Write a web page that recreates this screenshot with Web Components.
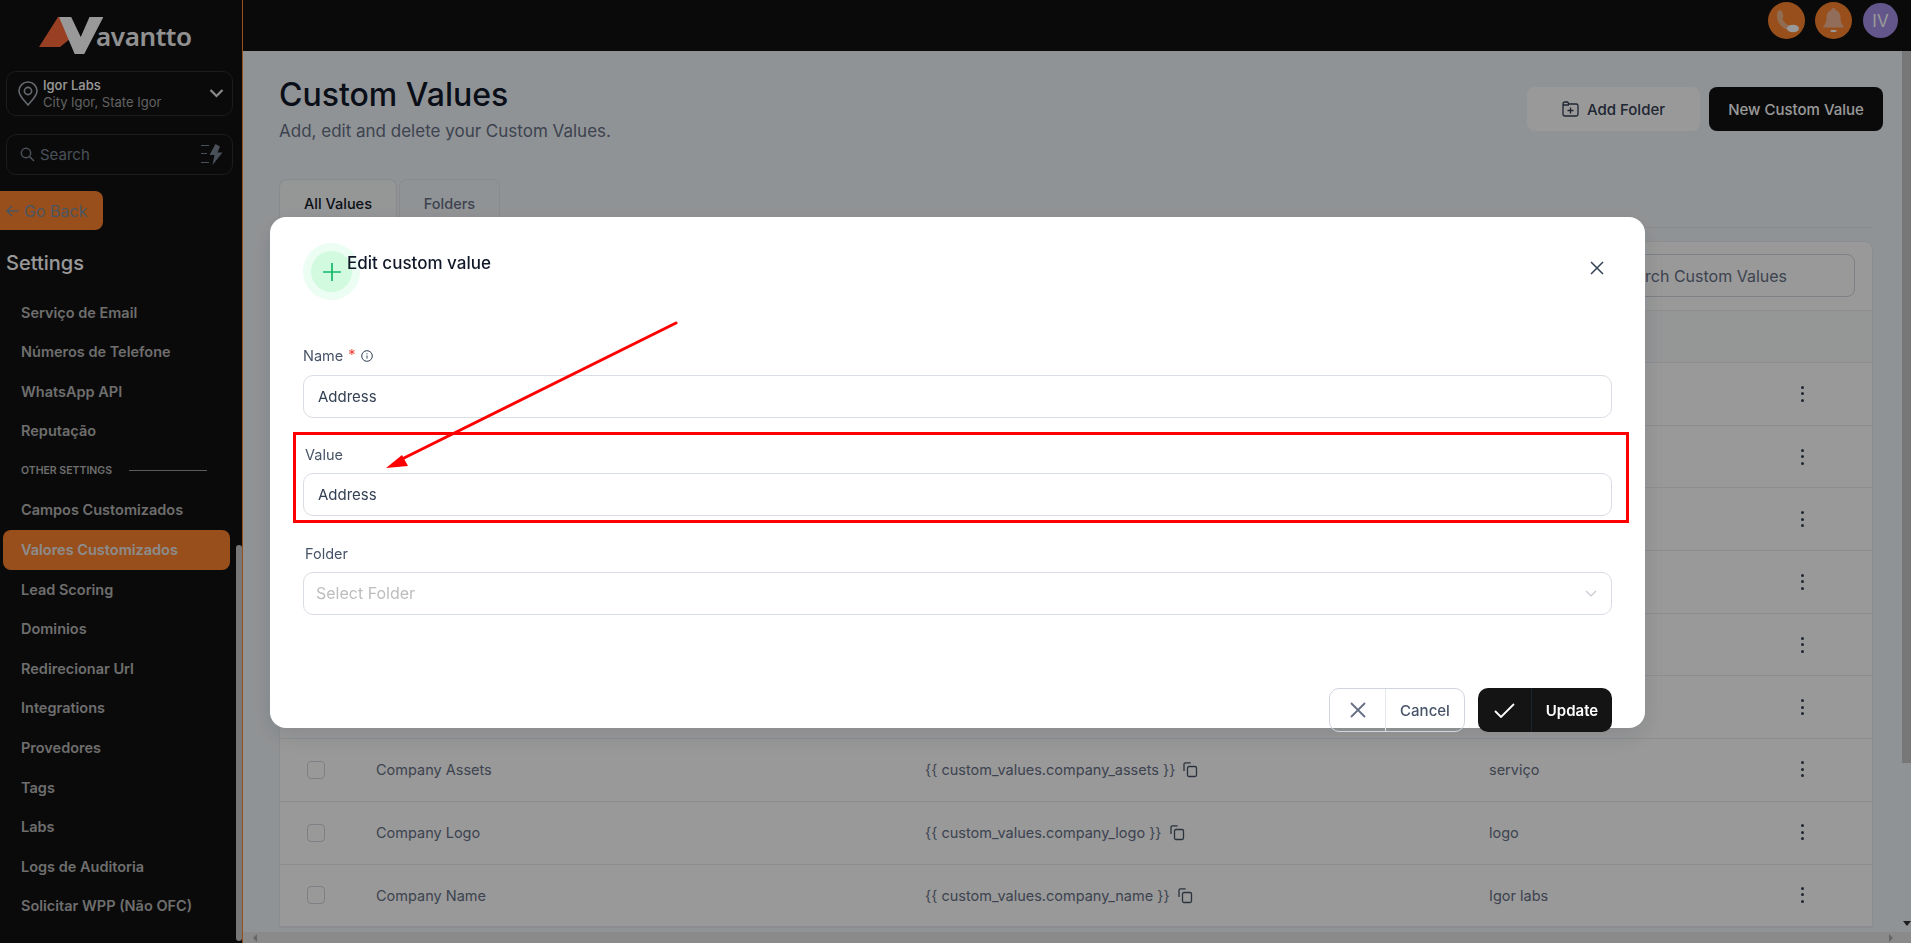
<!DOCTYPE html>
<html lang="en">
<head>
<meta charset="utf-8">
<title>Custom Values</title>
<style>
  html, body { margin: 0; height: 100%; overflow: hidden; background: #111; }
  body { font-family: Inter, "Liberation Sans", sans-serif; }
</style>
</head>
<body>
<app-shell>
  <side-bar slot="side">
    <nav-item>Serviço de Email</nav-item>
    <nav-item>Números de Telefone</nav-item>
    <nav-item>WhatsApp API</nav-item>
    <nav-item>Reputação</nav-item>
    <nav-group>OTHER SETTINGS</nav-group>
    <nav-item>Campos Customizados</nav-item>
    <nav-item active>Valores Customizados</nav-item>
    <nav-item>Lead Scoring</nav-item>
    <nav-item>Dominios</nav-item>
    <nav-item>Redirecionar Url</nav-item>
    <nav-item>Integrations</nav-item>
    <nav-item>Provedores</nav-item>
    <nav-item>Tags</nav-item>
    <nav-item>Labs</nav-item>
    <nav-item>Logs de Auditoria</nav-item>
    <nav-item>Solicitar WPP (Não OFC)</nav-item>
  </side-bar>
  <top-bar slot="top"></top-bar>
  <values-page slot="main">
    <value-row></value-row>
    <value-row></value-row>
    <value-row></value-row>
    <value-row></value-row>
    <value-row></value-row>
    <value-row></value-row>
    <value-row name="Company Assets" token="{{ custom_values.company_assets }}" folder="serviço"></value-row>
    <value-row name="Company Logo" token="{{ custom_values.company_logo }}" folder="logo"></value-row>
    <value-row name="Company Name" token="{{ custom_values.company_name }}" folder="Igor labs"></value-row>
  </values-page>
</app-shell>
<edit-modal>
  <form-field label="Name" required info value="Address"></form-field>
  <form-field label="Value" value="Address" tuck></form-field>
  <form-field label="Folder" placeholder="Select Folder" tuck select></form-field>
</edit-modal>
<red-notes></red-notes>

<script>
class AppShell extends HTMLElement {
  connectedCallback() {
    this.attachShadow({ mode: 'open' });
    this.shadowRoot.innerHTML = `
      <style>
        :host { display: grid; grid-template-columns: 243px 1fr; grid-template-rows: 51px 1fr; height: 943px; background: #f1f5f9; overflow: hidden; }
        .side { grid-row: 1 / 3; min-height: 0; }
        .main { min-height: 0; min-width: 0; display: flex; flex-direction: column; }
      </style>
      <div class="side"><slot name="side"></slot></div>
      <slot name="top"></slot>
      <div class="main"><slot name="main"></slot></div>
    `;
  }
}
customElements.define('app-shell', AppShell);

class SideBar extends HTMLElement {
  connectedCallback() {
    this.attachShadow({ mode: 'open' });
    this.shadowRoot.innerHTML = `
      <style>
        :host { display: block; position: relative; height: 943px; box-sizing: border-box; width: 243px; background: #111; border-right: 1px solid #ff842d; color: #b7b7b7; overflow: hidden; }
        .logo { display: flex; align-items: flex-start; height: 71px; padding: 17px 0 0 39px; box-sizing: border-box; }
        .logo svg { display: block; flex: none; }
        .logo span { font: 600 26px/1 "Noto Sans", sans-serif; color: #fff; margin: 1px 0 0 -7px; padding-top: 5px; letter-spacing: -0.4px; opacity: .95; }
        .box { margin: 0 9px 0 6px; width: 227px; box-sizing: border-box; border: 1px solid #2f2f2f; border-radius: 10px; display: flex; align-items: center; position: relative; }
        .loc { height: 45px; padding-left: 11px; }
        .loc .txt { margin-left: 5px; font-size: 13px; line-height: 17px; }
        .loc b { display: block; font-weight: 500; color: #fff; }
        .loc i { display: block; font-style: normal; color: #a3a3a3; }
        .loc .chev { position: absolute; right: 8px; top: 16px; }
        .find { height: 41px; margin-top: 18px; padding-left: 13px; color: #7c8694; font-size: 15px; }
        .find span { margin-left: 5px; }
        .find .bolt { position: absolute; right: 6px; top: 9px; }
        .back { display: flex; align-items: center; gap: 5px; margin-top: 16px; width: 103px; height: 39px; padding-left: 6px; box-sizing: border-box; background: #ff842d; border-radius: 0 8px 8px 0; color: #7c8ea3; font-size: 16px; }
        h2 { margin: 19px 0 15px 6px; font: 500 20px/28px Inter, sans-serif; color: #fff; }
        .thumb { position: absolute; left: 236px; top: 545px; width: 6px; height: 396px; border-radius: 3px; background: #c6c6c6; }
      </style>
      <div class="logo">
        <svg width="64" height="37" viewBox="0 0 64 37">
          <polygon points="0,30 19,0 27,0 37,17 21,30" fill="#ff6a3c"/>
          <polygon points="23,0 37,0 48,20 58,0 74,0 52,37 41,37" fill="#fff" transform="scale(.87 1)"/>
        </svg>
        <span>avantto</span>
      </div>
      <div class="box loc">
        <svg width="20" height="25" viewBox="0 0 20 25" fill="none" stroke="#a9b0ba" stroke-width="1.6"><path d="M10 24C6 19 1 15 1 10a9 9 0 0 1 18 0c0 5-5 9-9 14z"/><circle cx="10" cy="10" r="3.6"/></svg>
        <div class="txt"><b>Igor Labs</b><i>City Igor, State Igor</i></div>
        <svg class="chev" width="15" height="10" viewBox="0 0 15 10" fill="none" stroke="#e6e6e6" stroke-width="2.2"><path d="M1.5 2l6 6 6-6"/></svg>
      </div>
      <div class="box find">
        <svg width="15" height="15" viewBox="0 0 15 15" fill="none" stroke="#7c8694" stroke-width="1.5"><circle cx="6" cy="6" r="4.7"/><path d="M9.6 9.6L14 14"/></svg>
        <span>Search</span>
        <svg class="bolt" width="26" height="22" viewBox="0 0 26 22" fill="#7c8694"><path d="M15.5 0l-6 11h5l-2 10 10-12.500h-5l2.500-6z"/><rect x="1" y="1" width="8" height="1"/><rect x="1" y="9" width="6" height="1"/><rect x="1" y="18" width="8" height="1"/></svg>
      </div>
      <div class="back">
        <svg width="13" height="12" viewBox="0 0 13 12" fill="none" stroke="#7c8ea3" stroke-width="1.5"><path d="M12.500 6H1M6 1L1 6l5 5"/></svg>
        Go Back
      </div>
      <h2>Settings</h2>
      <slot></slot>
      <div class="thumb"></div>
    `;
  }
}
customElements.define('side-bar', SideBar);

class NavItem extends HTMLElement {
  connectedCallback() {
    this.attachShadow({ mode: 'open' });
    const on = this.hasAttribute('active');
    this.shadowRoot.innerHTML = `
      <style>
        :host { display: block; height: 39.6px; }
        div { margin-left: 3px; width: 227px; height: 40px; box-sizing: border-box; padding-left: 18px; display: flex; align-items: center; border-radius: 8px; font: 600 14.5px Inter, sans-serif; color: #b7b7b7; }
        .on { background: #ff842d; color: #e9e9e9; }
      </style>
      <div class="${on ? 'on' : ''}"><slot></slot></div>
    `;
  }
}
customElements.define('nav-item', NavItem);

class NavGroup extends HTMLElement {
  connectedCallback() {
    this.attachShadow({ mode: 'open' });
    this.shadowRoot.innerHTML = `
      <style>
        :host { display: flex; align-items: center; height: 39.6px; padding-left: 21px; font: 600 10.500px Inter, sans-serif; color: #b7b7b7; }
        i { display: block; margin-left: 17px; width: 78px; height: 1px; background: #9a9a9a; }
      </style>
      <slot></slot><i></i>
    `;
  }
}
customElements.define('nav-group', NavGroup);

class TopBar extends HTMLElement {
  connectedCallback() {
    this.attachShadow({ mode: 'open' });
    this.shadowRoot.innerHTML = `
      <style>
        :host { display: flex; align-items: center; justify-content: flex-end; gap: 10px; height: 51px; padding: 0 13px 10px 0; box-sizing: border-box; background: #111; }
        .dot { width: 37px; height: 37px; border-radius: 50%; background: #ff842d; display: flex; align-items: center; justify-content: center; }
        .me { width: 35px; height: 35px; margin-left: 1px; background: #a58fe6; color: #fff; font: 400 17px Inter, sans-serif; }
      </style>
      <div class="dot">
        <svg width="37" height="37" viewBox="0 0 37 37"><path d="M10 9c3-2 4 0 5 3s-1 4 0 6 3 4 5 5 3 1 2 3-3 2-5 1c-5-3-8-8-8-13 0-2 0-4 1-5z" fill="#f0b48a"/><ellipse cx="25" cy="26.500" rx="6" ry="3.800" fill="#fff"/></svg>
      </div>
      <div class="dot">
        <svg width="37" height="37" viewBox="0 0 37 37"><path d="M18.500 6c1.400 0 2.200 1 2.300 2.200 3.300 1 4.700 4 4.700 7.800 0 4 1 6 3 8v1.500H8.500V24c2-2 3-4 3-8 0-3.800 1.400-6.800 4.700-7.800.1-1.200.9-2.200 2.300-2.200z" fill="#f4b897"/><rect x="15.500" y="28" width="6" height="2" rx="1" fill="#fff"/></svg>
      </div>
      <div class="dot me">IV</div>
    `;
  }
}
customElements.define('top-bar', TopBar);

class ValuesPage extends HTMLElement {
  connectedCallback() {
    this.attachShadow({ mode: 'open' });
    this.shadowRoot.innerHTML = `
      <style>
        :host { display: flex; flex-direction: column; height: 892px; overflow: hidden; }
        .body { flex: 1; min-height: 0; display: flex; overflow: hidden; }
        .page { flex: 1; min-width: 0; padding: 25px 29px 0 36px; overflow: hidden; }
        .head { display: flex; justify-content: space-between; }
        h1 { margin: 0; font: 500 32px/38px Inter, sans-serif; color: #101828; }
        p { margin: 5px 0 0; font: 400 17px/24px Inter, sans-serif; color: #667085; }
        .acts { display: flex; gap: 9px; margin-top: 11px; margin-right: -10px; }
        .btn { height: 44px; box-sizing: border-box; display: flex; align-items: center; justify-content: center; border-radius: 8px; font: 500 15px Inter, sans-serif; }
        .add { width: 173px; gap: 8px; background: #fff; color: #344054; }
        .new { width: 174px; background: #111; color: #fff; }
        .tabs { display: flex; gap: 2px; margin-top: 36px; height: 48px; border-bottom: 1px solid #e4e7ec; box-sizing: content-box; }
        .tab { height: 48px; box-sizing: border-box; border: 1px solid #e4e7ec; border-bottom: 0; border-radius: 8px 8px 0 0; display: flex; align-items: center; justify-content: center; font: 500 14.500px Inter, sans-serif; color: #667085; }
        .tab.on { width: 118px; color: #101828; background: #f9fafb; }
        .tab.off { width: 101px; }
        .card { margin-top: 13px; background: #fff; border: 1px solid #eaecf0; border-radius: 8px 8px 0 0; }
        .tools { height: 69px; display: flex; justify-content: flex-end; align-items: flex-start; padding: 12px 17px 0 0; box-sizing: border-box; border-bottom: 1px solid #eaecf0; }
        .q { width: 300px; height: 43px; box-sizing: border-box; border: 1px solid #d0d5dd; border-radius: 8px; display: flex; align-items: center; justify-content: flex-end; padding-right: 67px; font: 400 16px Inter, sans-serif; color: #667085; }
        .thead { height: 52px; background: #f9fafb; border-bottom: 1px solid #eaecf0; box-sizing: border-box; }
        .vbar { width: 9px; flex: none; }
        .vbar i { display: block; height: 712px; background: #c6c6c6; }
        .vbar b { display: block; width: 0; margin: 158px auto 0; border: 4px solid transparent; border-top: 5px solid #333; }
        .hbar { height: 11px; flex: none; background: #e6e6e6; padding-left: 6px; display: flex; justify-content: space-between; align-items: center; padding-right: 14px; }
        .hbar i { width: 0; border: 4px solid transparent; }
        .hbar .l { border-right: 4px solid #aaa; }
        .hbar .r { border-left: 4px solid #aaa; }
      </style>
      <div class="body">
        <div class="page">
          <div class="head">
            <div><h1>Custom Values</h1><p>Add, edit and delete your Custom Values.</p></div>
            <div class="acts">
              <div class="btn add">
                <svg width="17" height="16" viewBox="0 0 17 16" fill="none" stroke="#344054" stroke-width="1.300"><path d="M1 4V2.800C1 1.800 1.800 1 2.800 1h2.700l1.500 2h7.200c1 0 1.800.8 1.800 1.800v8.400c0 1-.8 1.800-1.800 1.800H2.800c-1 0-1.800-.8-1.800-1.800V4h6"/><path d="M8.500 6.500v6M5.500 9.500h6"/></svg>
                Add Folder
              </div>
              <div class="btn new">New Custom Value</div>
            </div>
          </div>
          <div class="tabs"><div class="tab on">All Values</div><div class="tab off">Folders</div></div>
          <div class="card">
            <div class="tools"><div class="q">Search Custom Values</div></div>
            <div class="thead"></div>
            <slot></slot>
          </div>
        </div>
        <div class="vbar"><i></i><b></b></div>
      </div>
      <div class="hbar"><i class="l"></i><i class="r"></i></div>
    `;
  }
}
customElements.define('values-page', ValuesPage);

class ValueRow extends HTMLElement {
  connectedCallback() {
    this.attachShadow({ mode: 'open' });
    const name = this.getAttribute('name') || '';
    const token = this.getAttribute('token') || '';
    const folder = this.getAttribute('folder') || '';
    const copy = token ? `<svg width="17" height="17" viewBox="0 0 17 17" fill="none" stroke="#475467" stroke-width="1.300"><path d="M8 2.500V1.800H3.500C2.700 1.800 2 2.500 2 3.300V10"/><rect x="5.500" y="5.500" width="9" height="10" rx="1.500"/></svg>` : '';
    this.shadowRoot.innerHTML = `
      <style>
        :host { display: grid; grid-template-columns: 96px 549px 564px 1fr; align-items: center; height: 62.7px; box-sizing: border-box; border-bottom: 1px solid #eaecf0; font: 400 14.500px Inter, sans-serif; color: #667085; }
        .chk { width: 18px; height: 18px; margin-left: 27px; box-sizing: border-box; border: 1px solid #d0d5dd; border-radius: 4px; }
        .tok { display: flex; align-items: center; gap: 7px; }
        .more { display: flex; flex-direction: column; gap: 3.500px; width: 3px; margin-left: 312px; }
        .more i { width: 3px; height: 3px; border-radius: 50%; background: #344054; }
      </style>
      <div>${name ? '<div class="chk"></div>' : ''}</div>
      <div>${name}</div>
      <div class="tok">${token}${copy}</div>
      <div style="display:flex">
        <span style="width:0;white-space:nowrap">${folder}</span>
        <div class="more"><i></i><i></i><i></i></div>
      </div>
    `;
  }
}
customElements.define('value-row', ValueRow);

class EditModal extends HTMLElement {
  connectedCallback() {
    this.attachShadow({ mode: 'open' });
    this.shadowRoot.innerHTML = `
      <style>
        :host { position: fixed; inset: 0; display: block; background: rgba(0,0,0,.4); font-family: Inter, sans-serif; }
        .box { position: absolute; left: 270px; top: 217px; width: 1375px; height: 511px; box-sizing: border-box; padding: 26px 33px 0; background: #fff; border-radius: 16px; box-shadow: 0 8px 24px rgba(16,24,40,.12); }
        .hd { display: flex; align-items: flex-start; height: 103px; position: relative; }
        .ring { width: 57px; height: 57px; border-radius: 50%; background: #ecfdf3; display: flex; align-items: center; justify-content: center; flex: none; margin-top: 0; }
        .ring div { width: 41px; height: 41px; border-radius: 50%; background: #d1fadf; display: flex; align-items: center; justify-content: center; }
        h3 { margin: 8px 0 0 -13px; font: 500 17px/24px Inter, sans-serif; color: #101828; position: relative; }
        .close { position: absolute; right: 8px; top: 18px; }
        .foot { display: flex; justify-content: flex-end; gap: 13px; margin-top: 45px; }
        .b { height: 44px; box-sizing: border-box; border-radius: 10px; display: flex; align-items: stretch; font: 500 15px Inter, sans-serif; }
        .b span { display: flex; align-items: center; justify-content: center; }
        .cancel { width: 136px; border: 1px solid #d0d5dd; color: #475467; }
        .cancel .i { width: 55px; border-right: 1px solid #e4e7ec; }
        .cancel .t { flex: 1; }
        .ok { width: 134px; background: #141414; color: #fff; font-weight: 600; }
        .ok .i { width: 53px; border-right: 1px solid #1d2430; }
        .ok .t { flex: 1; }
      </style>
      <div class="box">
        <div class="hd">
          <div class="ring"><div>
            <svg width="18" height="18" viewBox="0 0 18 18" stroke="#12b76a" stroke-width="1.700" fill="none"><path d="M9 0v18M0 9h18"/></svg>
          </div></div>
          <h3>Edit custom value</h3>
          <svg class="close" width="14" height="14" viewBox="0 0 14 14" stroke="#344054" stroke-width="1.500" fill="none"><path d="M1 1l12 12M13 1L1 13"/></svg>
        </div>
        <slot></slot>
        <div class="foot">
          <div class="b cancel">
            <span class="i"><svg width="16" height="16" viewBox="0 0 16 16" stroke="#667085" stroke-width="1.800" fill="none"><path d="M1 1l14 14M15 1L1 15"/></svg></span>
            <span class="t">Cancel</span>
          </div>
          <div class="b ok">
            <span class="i"><svg width="21" height="15" viewBox="0 0 21 15" stroke="#fff" stroke-width="1.800" fill="none"><path d="M1 8l6 6L20 1"/></svg></span>
            <span class="t">Update</span>
          </div>
        </div>
      </div>
    `;
  }
}
customElements.define('edit-modal', EditModal);

class FormField extends HTMLElement {
  connectedCallback() {
    this.attachShadow({ mode: 'open' });
    const star = this.hasAttribute('required') ? '<em>*</em>' : '';
    const info = this.hasAttribute('info') ? `<svg width="12" height="12" viewBox="0 0 12 12" fill="none" stroke="#344054" stroke-width="1"><circle cx="6" cy="6" r="5.300"/><path d="M6 5.500v3M6 3.300v1"/></svg>` : '';
    const value = this.getAttribute('value');
    const ph = this.getAttribute('placeholder');
    const chev = this.hasAttribute('select') ? `<svg class="chev" width="12" height="7" viewBox="0 0 12 7" fill="none" stroke="#c4c8cf" stroke-width="1.200"><path d="M1 1l5 5 5-5"/></svg>` : '';
    this.shadowRoot.innerHTML = `
      <style>
        :host { display: block; height: 99px; }
        .lab { display: flex; align-items: center; gap: 5px; height: 19px; margin-left: ${this.hasAttribute('tuck') ? 2 : 0}px; font: 400 14.500px/19px Inter, sans-serif; color: #475467; }
        em { font-style: normal; color: #f04438; margin-top: -3px; }
        .inp { margin-top: ${this.hasAttribute('info') ? 9.500 : 8.500}px; height: 43px; box-sizing: border-box; border: 1px solid #d9dde4; border-radius: 10px; display: flex; align-items: center; justify-content: space-between; padding: 0 14px; font: 400 15px Inter, sans-serif; color: #344054; }
        .ph { font-size: 16px; color: #bdbdbd; margin-left: -2px; }
      </style>
      <div class="lab">${this.getAttribute('label')}${star}${info}</div>
      <div class="inp">${value ? `<span>${value}</span>` : `<span class="ph">${ph}</span>`}${chev}</div>
    `;
  }
}
customElements.define('form-field', FormField);

class RedNotes extends HTMLElement {
  connectedCallback() {
    this.attachShadow({ mode: 'open' });
    this.shadowRoot.innerHTML = `
      <style>
        :host { position: fixed; inset: 0; display: block; pointer-events: none; }
        svg { display: block; }
      </style>
      <svg width="1911" height="943" viewBox="0 0 1911 943" fill="none">
        <rect x="294.500" y="433.500" width="1333" height="88" stroke="#f00" stroke-width="3"/>
        <path d="M676 323L400 460" stroke="#f00" stroke-width="3" stroke-linecap="round"/>
        <polygon points="386,468 402,455 408,466" fill="#f00"/>
      </svg>
    `;
  }
}
customElements.define('red-notes', RedNotes);
</script>
</body>
</html>
